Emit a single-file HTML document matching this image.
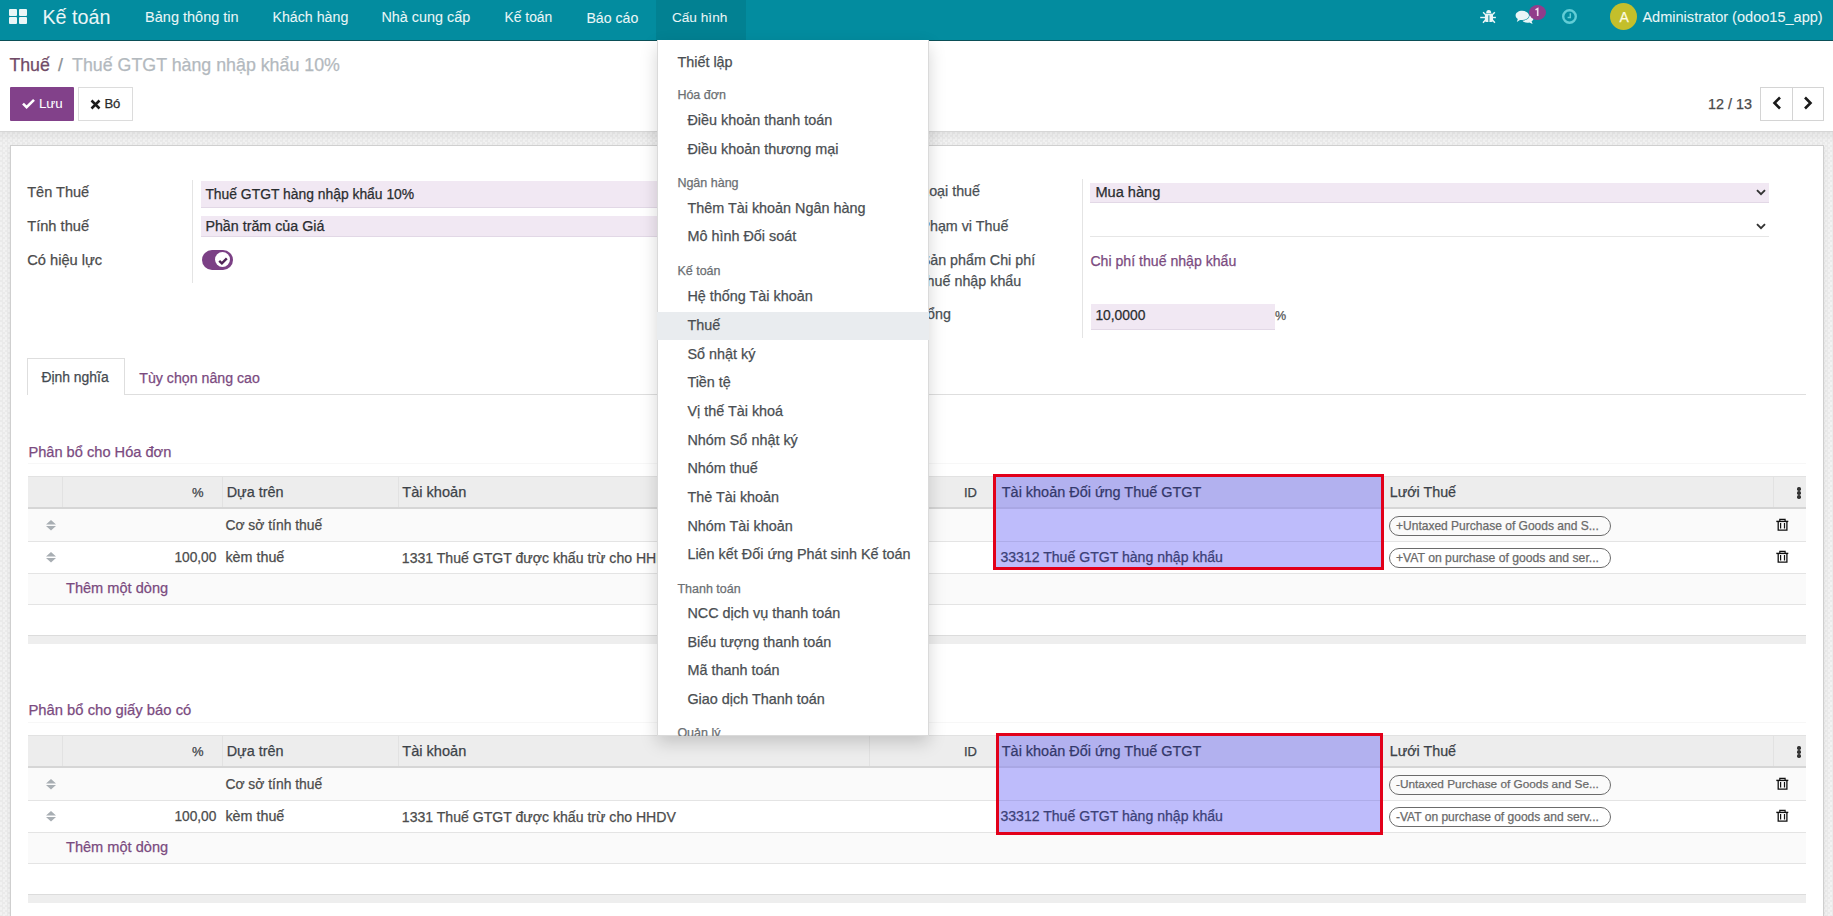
<!DOCTYPE html>
<html><head><meta charset="utf-8">
<style>
*{box-sizing:border-box;margin:0;padding:0}
html,body{width:1833px;height:916px;overflow:hidden}
body{position:relative;background:#efefef;font-family:"Liberation Sans",sans-serif;color:#4c4c4c}
.a{position:absolute}
.t{position:absolute;white-space:nowrap;line-height:1;font-family:"Liberation Sans",sans-serif;-webkit-text-stroke:0.25px currentColor}
.dd{z-index:21}
svg{position:absolute;overflow:visible}
</style></head><body>

<!-- background texture area -->
<div class="a" style="left:0;top:132px;width:1833px;height:784px;background:#efefef repeating-conic-gradient(#eaeaea 0% 25%, #f2f2f2 0% 50%) 0 0/5px 5px"></div>
<div class="a" style="left:0;top:132px;width:1833px;height:10px;background:linear-gradient(rgba(0,0,0,0.05),rgba(0,0,0,0))"></div>

<!-- NAVBAR -->
<div class="a" style="left:0;top:0;width:1833px;height:40px;background:#038c9f"></div>
<div class="a" style="left:0;top:40px;width:1833px;height:1px;background:#0b4f57"></div>
<div class="a" style="left:656px;top:0;width:90px;height:40px;background:rgba(0,0,0,0.08)"></div>
<!-- apps icon -->
<div class="a" style="left:9px;top:9px;width:8px;height:6.5px;background:#eaf6f7;border-radius:1px"></div>
<div class="a" style="left:19px;top:9px;width:7.5px;height:6.5px;background:#eaf6f7;border-radius:1px"></div>
<div class="a" style="left:9px;top:17px;width:8px;height:6.5px;background:#eaf6f7;border-radius:1px"></div>
<div class="a" style="left:19px;top:17px;width:7.5px;height:6.5px;background:#eaf6f7;border-radius:1px"></div>
<!-- bug icon -->
<svg style="left:1480px;top:9px" width="16" height="15" viewBox="0 0 16 15">
 <g fill="#eaf6f7">
  <path d="M6.2 3.9 A2.5 2.9 0 0 1 11.2 3.9 Z"/>
  <rect x="4.9" y="4.5" width="8.1" height="8.6" rx="1.6"/>
  <rect x="0.2" y="7.8" width="15.7" height="1.4"/>
 </g>
 <g stroke="#eaf6f7" stroke-width="1.4">
  <path d="M3.1 3.2 L5.6 5.8 M14.8 3.2 L12.3 5.8 M3 13.8 L5.4 11 M14.9 13.8 L12.5 11"/>
 </g>
 <rect x="8.2" y="6.3" width="1.3" height="6.6" fill="#2f98a6"/>
</svg>
<!-- comments icon -->
<svg style="left:1515px;top:10px" width="19" height="14" viewBox="0 0 19 14">
 <path fill="#eaf6f7" d="M7.3 0.8C3.4 0.8 0.6 2.9 0.6 5.5c0 1.4 0.9 2.6 2.2 3.4L1.8 12 5 9.9c0.7 0.2 1.5 0.2 2.3 0.2 3.9 0 6.7-2.1 6.7-4.6S11.2 0.8 7.3 0.8z"/>
 <path fill="#eaf6f7" d="M14.5 5.5c0 2.8-3 5-7 5.2 1 1.2 2.9 2 5 2 .6 0 1.2-.1 1.8-.2L17.6 14 16.6 11.3C17.8 10.5 18.5 9.4 18.5 8.2 18.5 7 17.8 6 16.6 5.3z"/>
</svg>
<div class="a" style="left:1528.5px;top:4.5px;width:17.5px;height:15.5px;border-radius:50%;background:#913d8b"></div>
<svg style="left:1533px;top:8px" width="8" height="9" viewBox="0 0 8 9"><path d="M2.5 1.9 L4.7 0.6 V8" fill="none" stroke="#f0dcee" stroke-width="1.6"/></svg>
<!-- clock -->
<svg style="left:1562px;top:9px" width="15" height="15" viewBox="0 0 15 15">
 <circle cx="7.5" cy="7.5" r="6.3" fill="none" stroke="#62cdd6" stroke-width="2.4"/>
 <path d="M8.3 4.3 V8.6 H5.6" fill="none" stroke="#62cdd6" stroke-width="1.5"/>
</svg>
<!-- avatar -->
<div class="a" style="left:1610px;top:3px;width:27px;height:27px;border-radius:50%;background:#c3bf2b"></div>

<!-- CONTROL PANEL -->
<div class="a" style="left:0;top:41px;width:1833px;height:90px;background:#ffffff"></div>
<div class="a" style="left:0;top:131px;width:1833px;height:1px;background:#d6d6d6"></div>
<div class="a" style="left:10px;top:87px;width:64px;height:34px;background:#82418a;border-radius:1px"></div>
<svg style="left:22px;top:98px" width="13" height="11" viewBox="0 0 13 11"><path d="M1 5.6 L4.6 9.2 L12 1.8" fill="none" stroke="#fff" stroke-width="2.6"/></svg>
<div class="a" style="left:78px;top:87px;width:55px;height:34px;background:#fff;border:1px solid #dcdcdc"></div>
<svg style="left:90px;top:98.5px" width="11" height="11" viewBox="0 0 11 11"><path d="M1.5 1.5 L9.5 9.5 M9.5 1.5 L1.5 9.5" stroke="#1c1c1c" stroke-width="2.5"/></svg>
<div class="a" style="left:1760px;top:87px;width:64px;height:34px;background:#fff;border:1px solid #d4d4d4"></div>
<div class="a" style="left:1792px;top:87px;width:1px;height:34px;background:#d4d4d4"></div>
<svg style="left:1772px;top:96px" width="10" height="14" viewBox="0 0 10 14"><path d="M8 1.5 L2.5 7 L8 12.5" fill="none" stroke="#1a1a1a" stroke-width="2.6"/></svg>
<svg style="left:1803px;top:96px" width="10" height="14" viewBox="0 0 10 14"><path d="M2 1.5 L7.5 7 L2 12.5" fill="none" stroke="#1a1a1a" stroke-width="2.6"/></svg>

<!-- SHEET -->
<div class="a" style="left:10px;top:145px;width:1814px;height:800px;background:#fff;border:1px solid #cfcfcf;box-shadow:0 1px 4px rgba(0,0,0,0.08)"></div>

<!-- group separators -->
<div class="a" style="left:192px;top:180px;width:1px;height:103px;background:#e4e4e4"></div>
<div class="a" style="left:1082px;top:179px;width:1px;height:159px;background:#e4e4e4"></div>
<!-- inputs -->
<div class="a" style="left:201px;top:181px;width:694px;height:27px;background:#f1e8f3;border-bottom:1px solid #e2d8e6"></div>
<div class="a" style="left:201px;top:216px;width:694px;height:21px;background:#f1e8f3;border-bottom:1px solid #e2d8e6"></div>
<div class="a" style="left:1090px;top:183px;width:679px;height:20px;background:#f1e8f3;border-bottom:1px solid #e2d8e6"></div>
<div class="a" style="left:1090px;top:236px;width:679px;height:1px;background:#e6e6e6"></div>
<div class="a" style="left:1091px;top:304px;width:184px;height:26px;background:#f1e8f3;border-bottom:1px solid #e2d8e6"></div>
<svg style="left:1756px;top:189px" width="10" height="7" viewBox="0 0 10 7"><path d="M1 1.2 L5 5.2 L9 1.2" fill="none" stroke="#333" stroke-width="1.9"/></svg>
<svg style="left:1756px;top:223px" width="10" height="7" viewBox="0 0 10 7"><path d="M1 1.2 L5 5.2 L9 1.2" fill="none" stroke="#333" stroke-width="1.9"/></svg>
<!-- toggle -->
<div class="a" style="left:202px;top:250px;width:31px;height:20px;border-radius:10px;background:#7b4085"></div>
<div class="a" style="left:214.8px;top:252px;width:15.4px;height:15.4px;border-radius:50%;background:#fff"></div>
<svg style="left:217.5px;top:256.5px" width="10" height="8" viewBox="0 0 10 8"><path d="M1.2 3.8 L3.9 6.4 L8.8 1.4" fill="none" stroke="#4f2456" stroke-width="2.4"/></svg>

<!-- TABS -->
<div class="a" style="left:27px;top:394px;width:1779px;height:1px;background:#dedede"></div>
<div class="a" style="left:27px;top:358px;width:98px;height:37px;background:#fff;border:1px solid #dedede;border-bottom:none"></div>

<div class="a" style="left:28px;top:463px;width:1778px;height:1px;background:#f7f7f7"></div>
<div class="a" style="left:28px;top:476px;width:1778px;height:32px;background:#ededed"></div>
<div class="a" style="left:28px;top:476px;width:1778px;height:1px;background:#e2e2e2"></div>
<div class="a" style="left:28px;top:507px;width:1778px;height:2px;background:#d6d6d6"></div>
<div class="a" style="left:28px;top:509px;width:1778px;height:1px;background:#eaeaea"></div>
<div class="a" style="left:62px;top:476px;width:1px;height:31px;background:#e2e2e2"></div>
<div class="a" style="left:222px;top:476px;width:1px;height:31px;background:#e2e2e2"></div>
<div class="a" style="left:398px;top:476px;width:1px;height:31px;background:#e2e2e2"></div>
<div class="a" style="left:869px;top:476px;width:1px;height:31px;background:#e2e2e2"></div>
<div class="a" style="left:1773px;top:476px;width:1px;height:31px;background:#e2e2e2"></div>
<div class="a" style="left:28px;top:509px;width:1778px;height:32px;background:#fafafa"></div>
<div class="a" style="left:28px;top:541px;width:1778px;height:1px;background:#e4e4e4"></div>
<div class="a" style="left:28px;top:542px;width:1778px;height:31px;background:#ffffff"></div>
<div class="a" style="left:28px;top:573px;width:1778px;height:1px;background:#e4e4e4"></div>
<div class="a" style="left:28px;top:574px;width:1778px;height:30px;background:#fafafa"></div>
<div class="a" style="left:28px;top:604px;width:1778px;height:1px;background:#e4e4e4"></div>
<div class="a" style="left:28px;top:635px;width:1778px;height:1px;background:#dcdcdc"></div>
<div class="a" style="left:28px;top:636px;width:1778px;height:8px;background:#eeeeee"></div>
<div class="a" style="left:996px;top:477px;width:385px;height:31px;background:#b2b1ef"></div>
<div class="a" style="left:996px;top:507px;width:385px;height:2px;background:#a9a7e4"></div>
<div class="a" style="left:996px;top:509px;width:385px;height:58px;background:#bebcfb"></div>
<div class="a" style="left:996px;top:541px;width:385px;height:1px;background:#aeace9"></div>
<svg style="left:46px;top:519.5px" width="10" height="11" viewBox="0 0 10 11"><path d="M5 0 L10 4.5 H0Z M0 6 H10 L5 10.5Z" fill="#a8aeb3"/></svg>
<svg style="left:46px;top:551.5px" width="10" height="11" viewBox="0 0 10 11"><path d="M5 0 L10 4.5 H0Z M0 6 H10 L5 10.5Z" fill="#a8aeb3"/></svg>
<svg style="left:1776px;top:518px" width="13" height="13" viewBox="0 0 13 13"><g fill="none" stroke="#111" stroke-width="1.3"><path d="M0.3 3.4 H12.3" stroke-width="1.4"/><path d="M3.8 3.2 V1.4 H9.1 V3.2" stroke-width="1.2"/><path d="M2.2 3.4 V12.2 H10.9 V3.4"/><path d="M4.6 5 V10.4 M8.5 5 V10.4" stroke-width="1.2"/></g></svg>
<svg style="left:1776px;top:550px" width="13" height="13" viewBox="0 0 13 13"><g fill="none" stroke="#111" stroke-width="1.3"><path d="M0.3 3.4 H12.3" stroke-width="1.4"/><path d="M3.8 3.2 V1.4 H9.1 V3.2" stroke-width="1.2"/><path d="M2.2 3.4 V12.2 H10.9 V3.4"/><path d="M4.6 5 V10.4 M8.5 5 V10.4" stroke-width="1.2"/></g></svg>
<div class="a" style="left:1797.3px;top:487.3px;width:3.4px;height:3.4px;background:#333;border-radius:50%"></div>
<div class="a" style="left:1797.3px;top:491.3px;width:3.4px;height:3.4px;background:#333;border-radius:50%"></div>
<div class="a" style="left:1797.3px;top:495.3px;width:3.4px;height:3.4px;background:#333;border-radius:50%"></div>
<div class="a" style="left:1389px;top:516px;width:222px;height:19.5px;border:1px solid #6b6b6b;border-radius:10px;background:transparent"></div>
<div class="a" style="left:1389px;top:548px;width:222px;height:19.5px;border:1px solid #6b6b6b;border-radius:10px;background:transparent"></div><div class="a" style="z-index:5;left:993px;top:474px;width:391px;height:96px;border:3px solid #e2001a"></div>
<div class="a" style="left:28px;top:722px;width:1778px;height:1px;background:#f7f7f7"></div>
<div class="a" style="left:28px;top:735px;width:1778px;height:32px;background:#ededed"></div>
<div class="a" style="left:28px;top:735px;width:1778px;height:1px;background:#e2e2e2"></div>
<div class="a" style="left:28px;top:766px;width:1778px;height:2px;background:#d6d6d6"></div>
<div class="a" style="left:28px;top:768px;width:1778px;height:1px;background:#eaeaea"></div>
<div class="a" style="left:62px;top:735px;width:1px;height:31px;background:#e2e2e2"></div>
<div class="a" style="left:222px;top:735px;width:1px;height:31px;background:#e2e2e2"></div>
<div class="a" style="left:398px;top:735px;width:1px;height:31px;background:#e2e2e2"></div>
<div class="a" style="left:869px;top:735px;width:1px;height:31px;background:#e2e2e2"></div>
<div class="a" style="left:1773px;top:735px;width:1px;height:31px;background:#e2e2e2"></div>
<div class="a" style="left:28px;top:768px;width:1778px;height:32px;background:#fafafa"></div>
<div class="a" style="left:28px;top:800px;width:1778px;height:1px;background:#e4e4e4"></div>
<div class="a" style="left:28px;top:801px;width:1778px;height:31px;background:#ffffff"></div>
<div class="a" style="left:28px;top:832px;width:1778px;height:1px;background:#e4e4e4"></div>
<div class="a" style="left:28px;top:833px;width:1778px;height:30px;background:#fafafa"></div>
<div class="a" style="left:28px;top:863px;width:1778px;height:1px;background:#e4e4e4"></div>
<div class="a" style="left:28px;top:894px;width:1778px;height:1px;background:#dcdcdc"></div>
<div class="a" style="left:28px;top:895px;width:1778px;height:8px;background:#eeeeee"></div>
<div class="a" style="left:999px;top:736px;width:381px;height:31px;background:#b2b1ef"></div>
<div class="a" style="left:999px;top:766px;width:381px;height:2px;background:#a9a7e4"></div>
<div class="a" style="left:999px;top:768px;width:381px;height:64px;background:#bebcfb"></div>
<div class="a" style="left:999px;top:800px;width:381px;height:1px;background:#aeace9"></div>
<svg style="left:46px;top:778.5px" width="10" height="11" viewBox="0 0 10 11"><path d="M5 0 L10 4.5 H0Z M0 6 H10 L5 10.5Z" fill="#a8aeb3"/></svg>
<svg style="left:46px;top:810.5px" width="10" height="11" viewBox="0 0 10 11"><path d="M5 0 L10 4.5 H0Z M0 6 H10 L5 10.5Z" fill="#a8aeb3"/></svg>
<svg style="left:1776px;top:777px" width="13" height="13" viewBox="0 0 13 13"><g fill="none" stroke="#111" stroke-width="1.3"><path d="M0.3 3.4 H12.3" stroke-width="1.4"/><path d="M3.8 3.2 V1.4 H9.1 V3.2" stroke-width="1.2"/><path d="M2.2 3.4 V12.2 H10.9 V3.4"/><path d="M4.6 5 V10.4 M8.5 5 V10.4" stroke-width="1.2"/></g></svg>
<svg style="left:1776px;top:809px" width="13" height="13" viewBox="0 0 13 13"><g fill="none" stroke="#111" stroke-width="1.3"><path d="M0.3 3.4 H12.3" stroke-width="1.4"/><path d="M3.8 3.2 V1.4 H9.1 V3.2" stroke-width="1.2"/><path d="M2.2 3.4 V12.2 H10.9 V3.4"/><path d="M4.6 5 V10.4 M8.5 5 V10.4" stroke-width="1.2"/></g></svg>
<div class="a" style="left:1797.3px;top:746.3px;width:3.4px;height:3.4px;background:#333;border-radius:50%"></div>
<div class="a" style="left:1797.3px;top:750.3px;width:3.4px;height:3.4px;background:#333;border-radius:50%"></div>
<div class="a" style="left:1797.3px;top:754.3px;width:3.4px;height:3.4px;background:#333;border-radius:50%"></div>
<div class="a" style="left:1389px;top:775px;width:222px;height:19.5px;border:1px solid #6b6b6b;border-radius:10px;background:transparent"></div>
<div class="a" style="left:1389px;top:807px;width:222px;height:19.5px;border:1px solid #6b6b6b;border-radius:10px;background:transparent"></div><div class="a" style="z-index:5;left:996px;top:733px;width:387px;height:102px;border:3px solid #e2001a"></div>

<div class="t" style="left:42.4px;top:8.30px;font-size:19.73px;color:#eaf6f7;-webkit-text-stroke:0.05px currentColor;">Kế toán</div>
<div class="t" style="left:145.1px;top:10.23px;font-size:14.5px;color:#eaf6f7;-webkit-text-stroke:0.05px currentColor;">Bảng thông tin</div>
<div class="t" style="left:272.4px;top:10.45px;font-size:14.24px;color:#eaf6f7;-webkit-text-stroke:0.05px currentColor;">Khách hàng</div>
<div class="t" style="left:381.4px;top:10.29px;font-size:14.42px;color:#eaf6f7;-webkit-text-stroke:0.05px currentColor;">Nhà cung cấp</div>
<div class="t" style="left:504.4px;top:10.72px;font-size:13.92px;color:#eaf6f7;-webkit-text-stroke:0.05px currentColor;">Kế toán</div>
<div class="t" style="left:586.4px;top:10.51px;font-size:14.17px;color:#eaf6f7;-webkit-text-stroke:0.05px currentColor;">Báo cáo</div>
<div class="t" style="left:671.9px;top:10.93px;font-size:13.67px;color:#eaf6f7;-webkit-text-stroke:0.05px currentColor;">Cấu hình</div>
<div class="t" style="left:1642.4px;top:9.87px;font-size:14.56px;color:#eaf6f7;-webkit-text-stroke:0.05px currentColor;">Administrator (odoo15_app)</div>
<div class="t" style="left:1619.4px;top:9.75px;font-size:14px;color:#fdfbe0;">A</div>
<div class="t" style="left:9.4px;top:57.26px;font-size:17.77px;color:#714b67;">Thuế</div>
<div class="t" style="left:57.9px;top:57.23px;font-size:17.8px;color:#8a8f94;">/</div>
<div class="t" style="left:72.1px;top:57.22px;font-size:17.81px;color:#b3b9be;">Thuế GTGT hàng nhập khẩu 10%</div>
<div class="t" style="left:38.9px;top:96.69px;font-size:13.36px;color:#ffffff;-webkit-text-stroke:0.05px currentColor;">Lưu</div>
<div class="t" style="left:104.4px;top:96.93px;font-size:13.08px;color:#2b2b2b;">Bó</div>
<div class="t" style="left:1708.1px;top:96.72px;font-size:14.39px;color:#4a4a4a;">12 / 13</div>
<div class="t" style="left:27.2px;top:184.68px;font-size:14.55px;color:#4c4c4c;">Tên Thuế</div>
<div class="t" style="left:27.2px;top:218.58px;font-size:14.67px;color:#4c4c4c;">Tính thuế</div>
<div class="t" style="left:27.2px;top:253.09px;font-size:14.66px;color:#4c4c4c;">Có hiệu lực</div>
<div class="t" style="left:205.4px;top:187.74px;font-size:13.89px;color:#2a2d30;">Thuế GTGT hàng nhập khẩu 10%</div>
<div class="t" style="left:205.4px;top:218.92px;font-size:14.27px;color:#2a2d30;">Phần trăm của Giá</div>
<div class="t" style="left:921.2px;top:184.40px;font-size:14.3px;color:#4a4f54;">Loại thuế</div>
<div class="t" style="left:920.4px;top:218.90px;font-size:14.3px;color:#4a4f54;">Phạm vi Thuế</div>
<div class="t" style="left:920.7px;top:252.90px;font-size:14.3px;color:#4a4f54;">Sản phẩm Chi phí</div>
<div class="t" style="left:917.9px;top:274.40px;font-size:14.3px;color:#4a4f54;">Thuế nhập khẩu</div>
<div class="t" style="left:918.4px;top:306.90px;font-size:14.3px;color:#4a4f54;">Tổng</div>
<div class="t" style="left:1095.4px;top:184.63px;font-size:14.61px;color:#2a2d30;">Mua hàng</div>
<div class="t" style="left:1090.4px;top:253.85px;font-size:14.12px;color:#7b4b7f;">Chi phí thuế nhập khẩu</div>
<div class="t" style="left:1095.4px;top:309.29px;font-size:13.83px;color:#2a2d30;">10,0000</div>
<div class="t" style="left:1274.9px;top:310.42px;font-size:12.5px;color:#555;">%</div>
<div class="t" style="left:41.4px;top:370.83px;font-size:13.91px;color:#444a50;">Định nghĩa</div>
<div class="t" style="left:139.3px;top:370.60px;font-size:14.18px;color:#7b4b7f;">Tùy chọn nâng cao</div>
<div class="t" style="left:28.4px;top:444.52px;font-size:14.63px;color:#7b4b7f;">Phân bổ cho Hóa đơn</div>
<div class="t" style="left:191.9px;top:486.30px;font-size:13px;color:#3c4248;">%</div>
<div class="t" style="left:226.7px;top:485.09px;font-size:14.43px;color:#3c4248;">Dựa trên</div>
<div class="t" style="left:402.3px;top:484.97px;font-size:14.57px;color:#3c4248;">Tài khoản</div>
<div class="t" style="left:963.9px;top:486.30px;font-size:13.0px;color:#3c4248;">ID</div>
<div class="t" style="left:1001.8px;top:485.08px;font-size:14.44px;color:#33386a;">Tài khoản Đối ứng Thuế GTGT</div>
<div class="t" style="left:1389.7px;top:485.20px;font-size:14.3px;color:#3c4248;">Lưới Thuế</div>
<div class="t" style="left:225.4px;top:519.04px;font-size:13.89px;color:#4c4c4c;">Cơ sở tính thuế</div>
<div class="t" style="left:174.4px;top:550.98px;font-size:13.73px;color:#4c4c4c;">100,00</div>
<div class="t" style="left:225.4px;top:550.46px;font-size:14.34px;color:#4c4c4c;">kèm thuế</div>
<div class="t" style="left:401.8px;top:550.68px;font-size:14.08px;color:#4c4c4c;">1331 Thuế GTGT được khấu trừ cho HHDV</div>
<div class="t" style="left:1000.4px;top:550.47px;font-size:14.09px;color:#3c4178;">33312 Thuế GTGT hàng nhập khẩu</div>
<div class="t" style="left:66.0px;top:581.45px;font-size:14.59px;color:#7b4b7f;">Thêm một dòng</div>
<div class="t" style="left:1396.0px;top:520.32px;font-size:12.03px;color:#6a6a6a;">+Untaxed Purchase of Goods and S...</div>
<div class="t" style="left:1396.0px;top:552.18px;font-size:12.19px;color:#6a6a6a;">+VAT on purchase of goods and ser...</div>
<div class="t" style="left:28.4px;top:703.36px;font-size:14.81px;color:#7b4b7f;">Phân bổ cho giấy báo có</div>
<div class="t" style="left:191.9px;top:745.30px;font-size:13px;color:#3c4248;">%</div>
<div class="t" style="left:226.7px;top:744.09px;font-size:14.43px;color:#3c4248;">Dựa trên</div>
<div class="t" style="left:402.3px;top:743.97px;font-size:14.57px;color:#3c4248;">Tài khoản</div>
<div class="t" style="left:963.9px;top:745.30px;font-size:13.0px;color:#3c4248;">ID</div>
<div class="t" style="left:1001.8px;top:744.08px;font-size:14.44px;color:#33386a;">Tài khoản Đối ứng Thuế GTGT</div>
<div class="t" style="left:1389.7px;top:744.20px;font-size:14.3px;color:#3c4248;">Lưới Thuế</div>
<div class="t" style="left:225.4px;top:778.04px;font-size:13.89px;color:#4c4c4c;">Cơ sở tính thuế</div>
<div class="t" style="left:174.4px;top:809.98px;font-size:13.73px;color:#4c4c4c;">100,00</div>
<div class="t" style="left:225.4px;top:809.46px;font-size:14.34px;color:#4c4c4c;">kèm thuế</div>
<div class="t" style="left:401.8px;top:809.68px;font-size:14.08px;color:#4c4c4c;">1331 Thuế GTGT được khấu trừ cho HHDV</div>
<div class="t" style="left:1000.4px;top:809.47px;font-size:14.09px;color:#3c4178;">33312 Thuế GTGT hàng nhập khẩu</div>
<div class="t" style="left:66.0px;top:840.45px;font-size:14.59px;color:#7b4b7f;">Thêm một dòng</div>
<div class="t" style="left:1396.0px;top:779.49px;font-size:11.82px;color:#6a6a6a;">-Untaxed Purchase of Goods and Se...</div>
<div class="t" style="left:1396.0px;top:811.32px;font-size:12.03px;color:#6a6a6a;">-VAT on purchase of goods and serv...</div>

<!-- DROPDOWN -->
<div class="a" style="z-index:20;left:657px;top:40px;width:272px;height:696px;background:#fff;box-shadow:0 7px 16px rgba(0,0,0,0.17);border:1px solid #dadada;border-top:none"></div>
<div class="a" style="z-index:20;left:657px;top:312px;width:272px;height:28px;background:#e9ecef"></div>
<div class="a" style="z-index:21;left:0;top:0;width:929px;height:736px;overflow:hidden">
<div class="t dd" style="left:677.4px;top:54.61px;font-size:14.4px;color:#4a4e52;">Thiết lập</div>
<div class="t dd" style="left:677.4px;top:89.42px;font-size:12.5px;color:#6b6f73;">Hóa đơn</div>
<div class="t dd" style="left:687.4px;top:113.11px;font-size:14.4px;color:#4a4e52;">Điều khoản thanh toán</div>
<div class="t dd" style="left:687.4px;top:141.81px;font-size:14.4px;color:#4a4e52;">Điều khoản thương mại</div>
<div class="t dd" style="left:677.4px;top:177.42px;font-size:12.5px;color:#6b6f73;">Ngân hàng</div>
<div class="t dd" style="left:687.4px;top:200.61px;font-size:14.4px;color:#4a4e52;">Thêm Tài khoản Ngân hàng</div>
<div class="t dd" style="left:687.4px;top:229.41px;font-size:14.4px;color:#4a4e52;">Mô hình Đối soát</div>
<div class="t dd" style="left:677.4px;top:265.02px;font-size:12.5px;color:#6b6f73;">Kế toán</div>
<div class="t dd" style="left:687.4px;top:289.21px;font-size:14.4px;color:#4a4e52;">Hệ thống Tài khoản</div>
<div class="t dd" style="left:687.4px;top:318.11px;font-size:14.4px;color:#4a4e52;">Thuế</div>
<div class="t dd" style="left:687.4px;top:346.81px;font-size:14.4px;color:#4a4e52;">Sổ nhật ký</div>
<div class="t dd" style="left:687.4px;top:375.41px;font-size:14.4px;color:#4a4e52;">Tiền tệ</div>
<div class="t dd" style="left:687.4px;top:404.11px;font-size:14.4px;color:#4a4e52;">Vị thế Tài khoá</div>
<div class="t dd" style="left:687.4px;top:432.81px;font-size:14.4px;color:#4a4e52;">Nhóm Sổ nhật ký</div>
<div class="t dd" style="left:687.4px;top:461.41px;font-size:14.4px;color:#4a4e52;">Nhóm thuế</div>
<div class="t dd" style="left:687.4px;top:490.11px;font-size:14.4px;color:#4a4e52;">Thẻ Tài khoản</div>
<div class="t dd" style="left:687.4px;top:518.81px;font-size:14.4px;color:#4a4e52;">Nhóm Tài khoản</div>
<div class="t dd" style="left:687.4px;top:547.41px;font-size:14.4px;color:#4a4e52;">Liên kết Đối ứng Phát sinh Kế toán</div>
<div class="t dd" style="left:677.4px;top:583.02px;font-size:12.5px;color:#6b6f73;">Thanh toán</div>
<div class="t dd" style="left:687.4px;top:606.11px;font-size:14.4px;color:#4a4e52;">NCC dịch vụ thanh toán</div>
<div class="t dd" style="left:687.4px;top:634.81px;font-size:14.4px;color:#4a4e52;">Biểu tượng thanh toán</div>
<div class="t dd" style="left:687.4px;top:663.41px;font-size:14.4px;color:#4a4e52;">Mã thanh toán</div>
<div class="t dd" style="left:687.4px;top:692.11px;font-size:14.4px;color:#4a4e52;">Giao dịch Thanh toán</div>
<div class="t dd" style="left:677.4px;top:727.42px;font-size:12.5px;color:#6b6f73;">Quản lý</div>
</div>

</body></html>
